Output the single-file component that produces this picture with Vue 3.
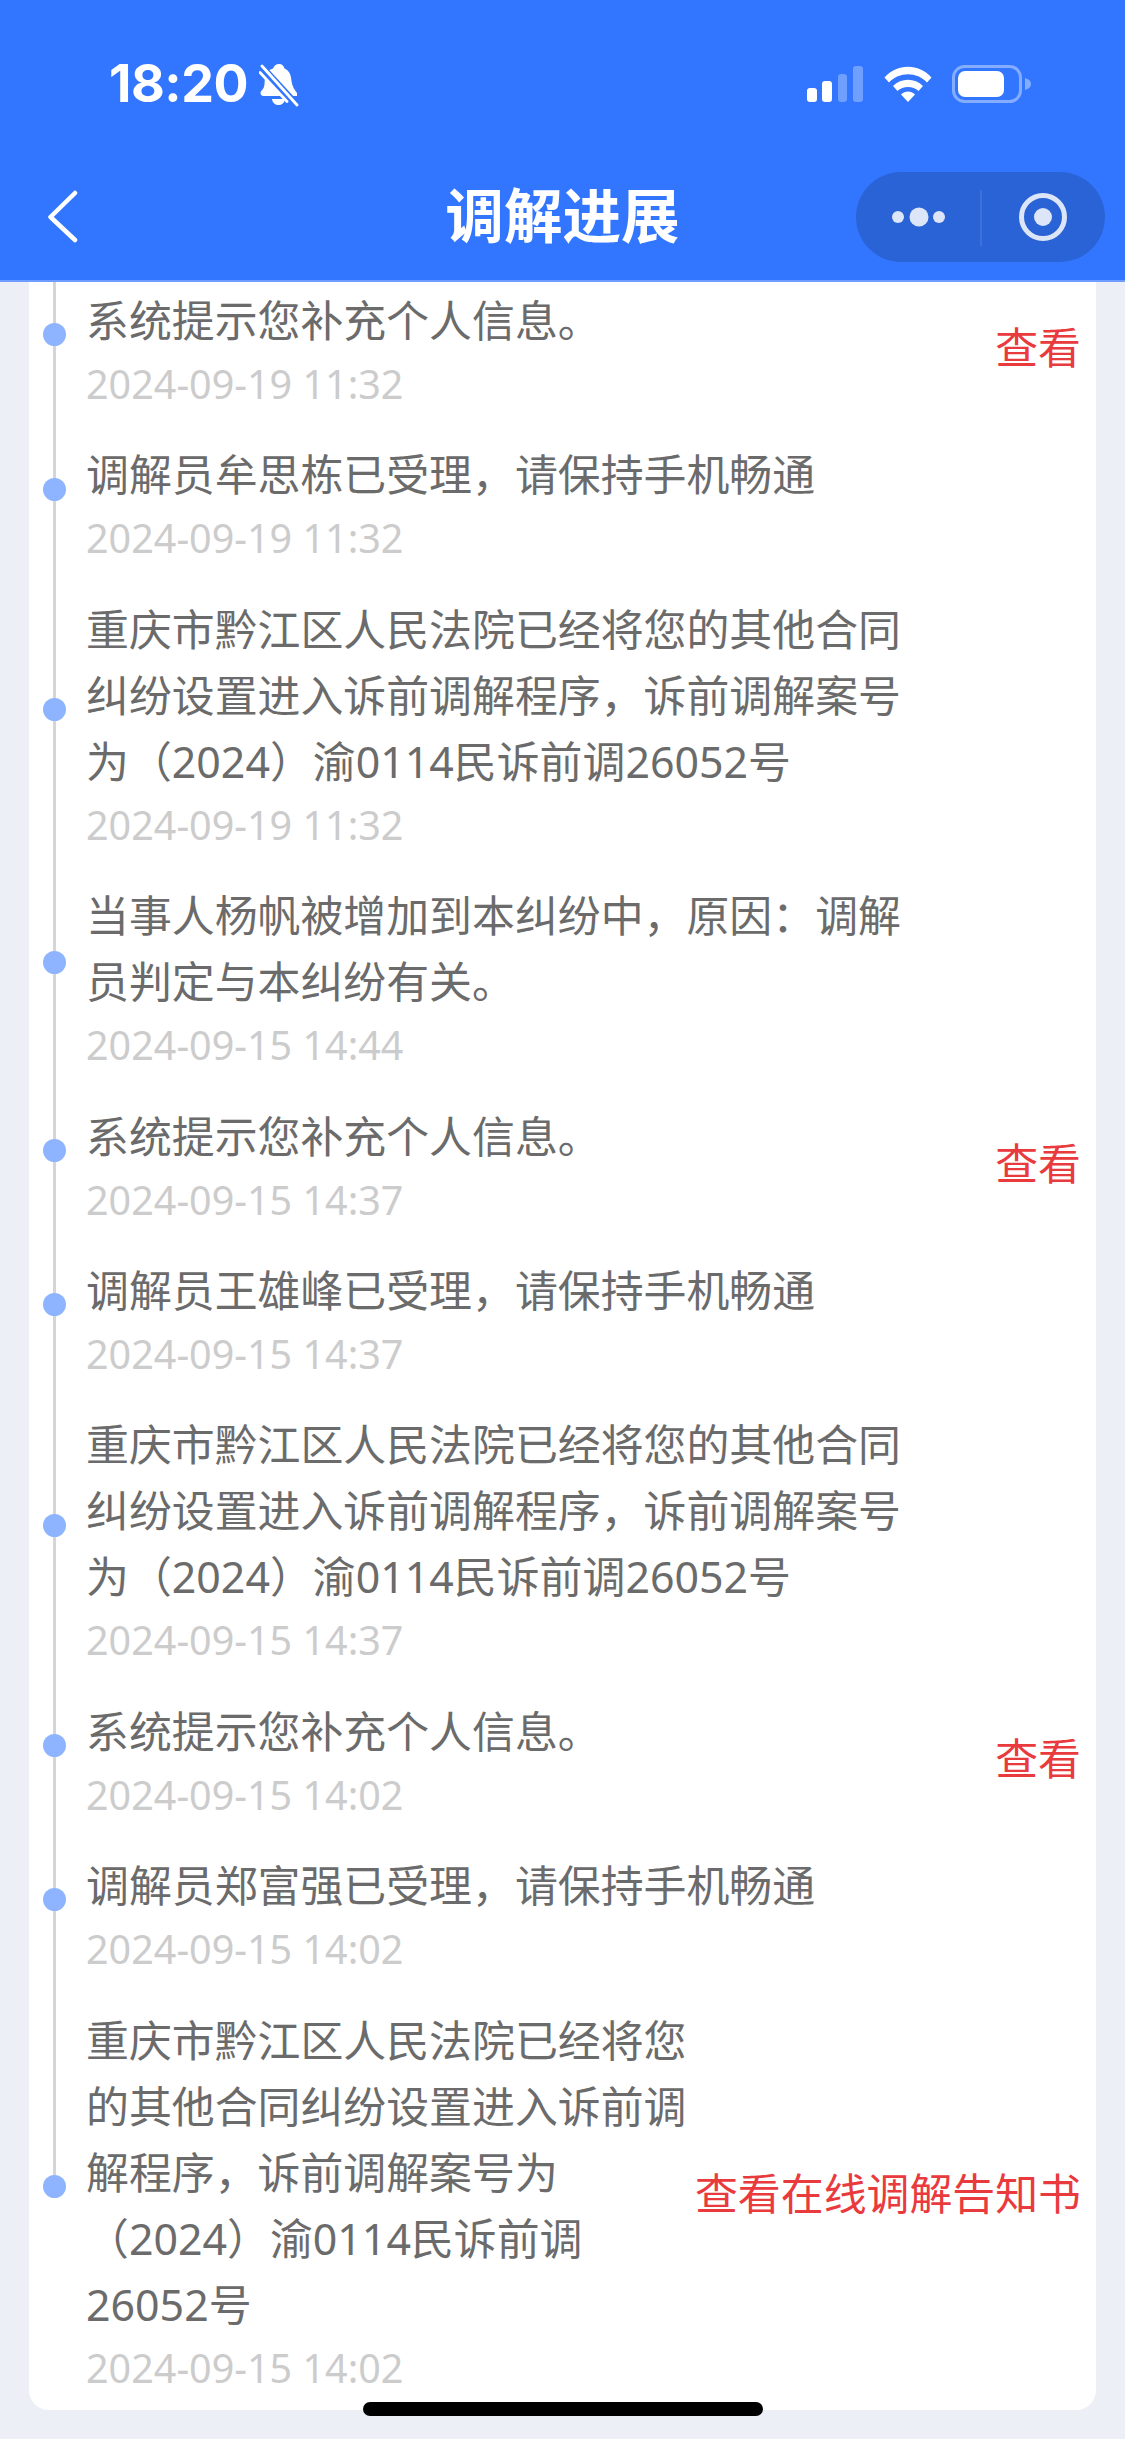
<script setup>
const court = '重庆市黔江区人民法院已经将您的其他合同纠纷设置进入诉前调解程序，诉前调解案号为（2024）渝0114民诉前调26052号'
const items = [
  { text: '系统提示您补充个人信息。', date: '2024-09-19 11:32', link: '查看' },
  { text: '调解员牟思栋已受理，请保持手机畅通', date: '2024-09-19 11:32' },
  { text: court, date: '2024-09-19 11:32' },
  { text: '当事人杨帆被增加到本纠纷中，原因：调解员判定与本纠纷有关。', date: '2024-09-15 14:44' },
  { text: '系统提示您补充个人信息。', date: '2024-09-15 14:37', link: '查看' },
  { text: '调解员王雄峰已受理，请保持手机畅通', date: '2024-09-15 14:37' },
  { text: court, date: '2024-09-15 14:37' },
  { text: '系统提示您补充个人信息。', date: '2024-09-15 14:02', link: '查看' },
  { text: '调解员郑富强已受理，请保持手机畅通', date: '2024-09-15 14:02' },
  { text: court, date: '2024-09-15 14:02', link: '查看在线调解告知书' }
]
</script>

<template>
  <div class="page">
    <header class="header">
      <div class="status">
        <div class="status-left">
          <span class="time">18:20</span>
          <svg class="bell" width="40" height="44" viewBox="0 0 40 44">
            <path d="M20 1c3 0 5 2 5.500 4.500C31 8 32 13 32.500 18c.5 5 3 9 5.500 12v3H4.500c-1.500 0-3-1-3-3 0-2 2.500-3.500 3.500-6 .8-2.500.5-6 1-9 .6-4 2.500-8 8-9.500C15 3 17 1 20 1z" fill="#fff"/>
            <path d="M13 36h13c-.5 4-3.500 6-6.500 6S13.500 40 13 36z" fill="#fff"/>
            <path d="M3 5l34 37" stroke="#3276ff" stroke-width="8"/>
            <path d="M3 3l35 39M1 9.500l27 29" stroke="#fff" stroke-width="2.800" stroke-linecap="round"/>
          </svg>
        </div>
        <div class="status-right">
          <svg width="57" height="36" viewBox="0 0 57 36">
            <rect x="0" y="22" width="10" height="14" rx="3" fill="#fff"/>
            <rect x="15" y="15" width="10" height="21" rx="3" fill="#fff"/>
            <rect x="31" y="8" width="9" height="28" rx="3" fill="#fff" opacity=".3"/>
            <rect x="46" y="0" width="10" height="36" rx="3" fill="#fff" opacity=".3"/>
          </svg>
          <svg width="48" height="36" viewBox="0 0 48 36">
            <path d="M0.500 11.500C13 -3 35 -3 47.500 11.500L43 16.500C33 5.500 15 5.500 5 16.500z" fill="#fff"/>
            <path d="M9 20C17 11.500 31 11.500 39 20L34.500 25C29 19.500 19 19.500 13.500 25z" fill="#fff"/>
            <path d="M17 28.500C21 24.500 27 24.500 31 28.500L24 36z" fill="#fff"/>
          </svg>
          <svg width="79" height="38" viewBox="0 0 79 38">
            <rect x="1.500" y="1.500" width="67" height="35" rx="11" fill="none" stroke="#fff" stroke-opacity=".4" stroke-width="3"/>
            <rect x="6" y="6" width="46" height="26" rx="7" fill="#fff"/>
            <path d="M73 13c3.500 1 6 3 6 6s-2.500 5-6 6z" fill="#fff" fill-opacity=".4"/>
          </svg>
        </div>
      </div>
      <div class="nav">
        <div class="nav-left">
          <svg width="34" height="54" viewBox="0 0 34 54">
            <path d="M28 3L3.500 27L28 50" fill="none" stroke="#fff" stroke-width="4.500" stroke-linecap="round" stroke-linejoin="round"/>
          </svg>
        </div>
        <h1 class="title">调解进展</h1>
        <div class="nav-right">
          <div class="capsule">
            <svg width="249" height="90" viewBox="0 0 249 90">
              <circle cx="42" cy="45" r="6" fill="#dde6f8"/>
              <circle cx="63" cy="45" r="9.500" fill="#dde6f8"/>
              <circle cx="83" cy="45" r="6" fill="#dde6f8"/>
              <path d="M125 18v56" stroke="#fff" stroke-opacity=".13" stroke-width="1.500"/>
              <circle cx="187" cy="45" r="21.500" fill="none" stroke="#dde6f8" stroke-width="5"/>
              <circle cx="187" cy="45" r="9" fill="#dde6f8"/>
            </svg>
          </div>
        </div>
      </div>
    </header>
    <main class="card">
      <ul class="list">
        <li v-for="(item, i) in items" :key="i" class="row">
          <span class="dot"></span>
          <div class="body">
            <p class="text">{{ item.text }}</p>
            <p class="date">{{ item.date }}</p>
          </div>
          <a v-if="item.link" class="link">{{ item.link }}</a>
        </li>
      </ul>
    </main>
    <div class="home"></div>
  </div>
</template>

<style scoped>
.page {
  position: relative;
  width: 1125px;
  height: 2439px;
  overflow: hidden;
  background: #ecf0f6;
  font-family: "Noto Sans", "Noto Sans CJK SC", sans-serif;
}
.header {
  height: 280px;
  background: #3276ff;
  border-bottom: 2px solid #6f9dff;
  box-sizing: content-box;
  color: #fff;
}
.status {
  height: 172px;
  display: flex;
  justify-content: space-between;
  box-sizing: border-box;
  padding: 63px 94px 0 109px;
}
.status-left {
  display: flex;
  align-items: flex-start;
  gap: 11px;
}
.time {
  font-family: Inter, sans-serif;
  font-weight: 700;
  font-size: 52px;
  line-height: 42px;
  letter-spacing: -0.5px;
}
.status-right {
  display: flex;
  align-items: flex-start;
  gap: 20px;
  padding-top: 3px;
}
.status-right svg:nth-child(3) { margin-top: -1px; }
.nav {
  height: 90px;
  display: grid;
  grid-template-columns: 1fr auto 1fr;
  align-items: center;
}
.nav-left {
  padding-left: 47px;
  display: flex;
  align-items: center;
}
.title {
  margin: -8px 0 0;
  font-size: 58.600px;
  font-weight: 700;
  line-height: 90px;
  font-family: "Noto Sans CJK SC", sans-serif;
}
.nav-right {
  display: flex;
  justify-content: flex-end;
  padding-right: 20px;
}
.capsule {
  width: 249px;
  height: 90px;
  border-radius: 45px;
  background: #2a63d6;
}
.capsule svg { display: block; }
.card {
  margin: 0 29px;
  height: 2128px;
  background: #fff;
  border-radius: 0 0 20px 20px;
  overflow: hidden;
}
.list {
  list-style: none;
  margin: -26px 0 0;
  padding: 0 15px 0 57px;
}
.row {
  position: relative;
  display: flex;
  align-items: center;
  justify-content: space-between;
  padding-top: 32px;
}
.row::before {
  content: "";
  position: absolute;
  left: -33px;
  top: 0;
  bottom: 0;
  width: 3px;
  background: #d3d5d9;
}
.row:last-child::before { bottom: 50%; }
.dot {
  position: absolute;
  left: -43px;
  top: 50%;
  width: 23px;
  height: 23px;
  margin-top: -10px;
  border-radius: 50%;
  background: #8fb4ff;
}
.body {
  flex: 1;
  max-width: 826px;
  min-width: 0;
}
.text {
  margin: 0;
  font-size: 42.900px;
  line-height: 66px;
  color: #6b6b6b;
}
.date {
  margin: 0;
  height: 56.400px;
  font-size: 39.500px;
  line-height: 60px;
  color: #ccc;
}
.link {
  flex: none;
  margin-left: 4px;
  margin-top: -2px;
  font-size: 42.900px;
  line-height: 66px;
  color: #e93a3e;
  white-space: nowrap;
}
.row:last-child .link { margin-top: -14px; }
.home {
  position: absolute;
  left: 363px;
  top: 2402px;
  width: 400px;
  height: 14px;
  border-radius: 7px;
  background: #000;
}
</style>

<style>
html, body { margin: 0; background: #ecf0f6; }
</style>
